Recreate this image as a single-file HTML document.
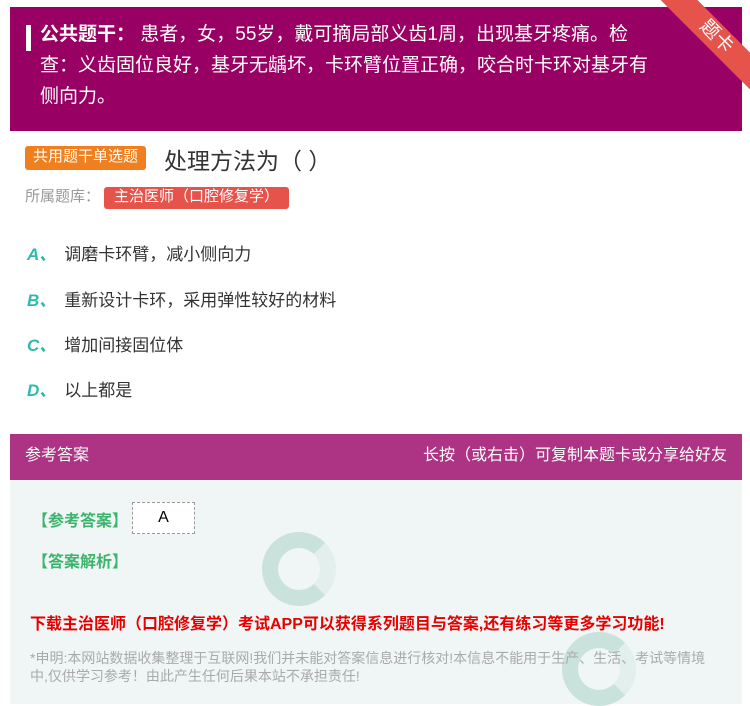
<!DOCTYPE html>
<html><head><meta charset="utf-8"><style>
body{margin:0;width:750px;height:704px;background:#fff;font-family:"Liberation Sans","Noto Sans CJK SC",sans-serif;position:relative;overflow:hidden}
.top{position:absolute;left:10px;top:7px;width:732px;height:124px;background:#990063;color:#fff;font-size:19px;line-height:31px}
.top .t{position:absolute;left:30px;top:12px;width:625px}
.bar{position:absolute;left:16px;top:18px;width:5px;height:26px;background:#fff}
.rib{position:absolute;width:140px;height:26px;background:#e5534b;transform:rotate(45deg);color:#fff;font-size:19px;text-align:center;line-height:26px}
.tag{position:absolute;left:25px;top:146px;background:#f0801f;color:#fff;font-size:15px;padding:0 8px;height:24px;line-height:22px;border-radius:3px}
.q{position:absolute;left:164px;top:142px;font-size:23px;color:#333}
.lib{position:absolute;left:25px;top:185px;font-size:15px;color:#999}
.lib span{background:#e5534b;color:#fff;padding:1px 10px 4px;border-radius:3px;margin-left:4px}
.opt{position:absolute;left:27px;font-size:17px;color:#333}
.opt b{color:#2bbbad;font-style:italic;margin-right:8px}
.ah{position:absolute;left:10px;top:434px;width:732px;height:46px;background:#ad3484;color:#fff;font-size:16px;line-height:44px}
.ab{position:absolute;left:10px;top:480px;width:732px;height:224px;background:#eff6f5}
.g{position:absolute;left:32px;color:#3bb56c;font-size:16px;font-weight:bold}
.red{position:absolute;left:30px;top:610px;color:#e60000;font-size:16px;font-weight:bold}
.note{position:absolute;left:30px;top:649px;width:690px;color:#aaa;font-size:14px;line-height:18px}
.c{position:absolute;width:74px;height:74px;border-radius:50%;border:16px solid #c9e2dc;border-right-color:#e3efec;box-sizing:border-box}
</style></head><body>
<div class="top"><div class="bar"></div><div class="t"><b>公共题干：</b> 患者，女，55岁，戴可摘局部义齿1周，出现基牙疼痛。检查：义齿固位良好，基牙无龋坏，卡环臂位置正确，咬合时卡环对基牙有侧向力。</div></div>
<div class="rib" style="right:-36px;top:24px">题卡</div>
<div class="tag">共用题干单选题</div><div class="q">处理方法为（ ）</div>
<div class="lib">所属题库：<span>主治医师（口腔修复学）</span></div>
<div class="opt" style="top:240px"><b>A、</b>调磨卡环臂，减小侧向力</div>
<div class="opt" style="top:286px"><b>B、</b>重新设计卡环，采用弹性较好的材料</div>
<div class="opt" style="top:331px"><b>C、</b>增加间接固位体</div>
<div class="opt" style="top:376px"><b>D、</b>以上都是</div>
<div class="ah"><span style="margin-left:15px">参考答案</span><span style="float:right;margin-right:15px">长按（或右击）可复制本题卡或分享给好友</span></div>
<div class="ab"></div>
<div class="g" style="top:507px">【参考答案】</div>
<div style="position:absolute;left:132px;top:502px;width:63px;height:32px;background:#fff;border:1px dashed #999;box-sizing:border-box;font-size:16px;text-align:center;line-height:30px">A</div>
<div class="g" style="top:548px">【答案解析】</div>
<div class="c" style="left:262px;top:532px"></div>
<div class="c" style="left:562px;top:632px"></div>
<div class="red">下载主治医师（口腔修复学）考试APP可以获得系列题目与答案,还有练习等更多学习功能!</div>
<div class="note">*申明:本网站数据收集整理于互联网!我们并未能对答案信息进行核对!本信息不能用于生产、生活、考试等情境中,仅供学习参考！由此产生任何后果本站不承担责任!</div>
</body></html>
